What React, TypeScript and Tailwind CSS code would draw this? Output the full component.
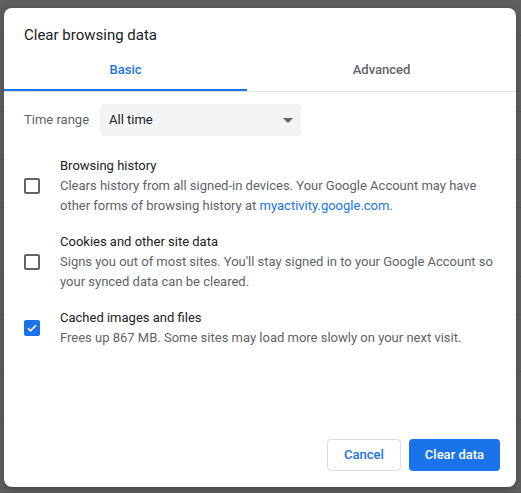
import React from "react";

const rows = [36, 76, 48, 48, 69, 38, 57, 48, 73];

function Checkbox({ checked }: { checked?: boolean }) {
  if (checked) {
    return (
      <div className="w-[16px] h-[16px] shrink-0 rounded-[2px] bg-[#1a73e8] flex items-center justify-center">
        <svg width="12" height="12" viewBox="0 0 24 24">
          <path d="M4 12.5l5 5L20 6.5" fill="none" stroke="#fff" strokeWidth="3.4" />
        </svg>
      </div>
    );
  }
  return <div className="w-[16px] h-[16px] shrink-0 rounded-[2px] border-2 border-[#5f6368]" />;
}

function Item({
  checked,
  title,
  children,
}: {
  checked?: boolean;
  title: string;
  children: React.ReactNode;
}) {
  return (
    <div className="flex items-center gap-[20px]">
      <Checkbox checked={checked} />
      <div className="flex flex-col">
        <div className="text-[13px] leading-[20px] text-[#202124]">{title}</div>
        <div className="text-[13px] leading-[20px] text-[#5f6368] whitespace-nowrap">{children}</div>
      </div>
    </div>
  );
}

export default function App() {
  return (
    <div className="relative w-[521px] h-[493px] overflow-hidden bg-[#5f5f5f] font-['Roboto','Liberation_Sans',sans-serif]">
      <div className="flex flex-col">
        {rows.map((h, i) => (
          <div key={i} style={{ height: h }} className="border-b border-[#565656]" />
        ))}
      </div>
      <div className="absolute left-[4px] top-[8px] w-[512px] h-[479px] bg-white rounded-[8px] shadow-[0_2px_6px_rgba(0,0,0,0.3)] flex flex-col">
        <div className="pl-[20px] pt-[15px] text-[15px] leading-[24px] text-[#202124]">
          Clear browsing data
        </div>
        <div className="flex h-[45px] border-b border-[#e0e0e0]">
          <div className="w-[243px] flex items-center justify-center pt-[3px] border-b-2 border-[#1a73e8] text-[13px] font-medium text-[#1a73e8]">
            Basic
          </div>
          <div className="flex-1 flex items-center justify-center pt-[1px] text-[13px] font-medium text-[#5f6368]">
            Advanced
          </div>
        </div>
        <div className="px-[20px] pt-[12px] flex flex-col">
          <div className="flex items-center">
            <div className="w-[76px] text-[13px] text-[#5f6368]">Time range</div>
            <div className="w-[201px] h-[32px] bg-[#f1f3f4] rounded-[4px] pl-[9px] pr-[8px] flex items-center justify-between">
              <span className="text-[13px] text-[#202124]">All time</span>
              <svg width="10" height="5" viewBox="0 0 10 5">
                <path d="M0 0h10L5 5z" fill="#5f6368" />
              </svg>
            </div>
          </div>
          <div className="mt-[20px] flex flex-col gap-[16px]">
            <Item title="Browsing history">
              Clears history from all signed-in devices. Your Google Account may have
              <br />
              other forms of browsing history at{" "}
              <span className="text-[#1a73e8]">myactivity.google.com</span>.
            </Item>
            <Item title="Cookies and other site data">
              Signs you out of most sites. You'll stay signed in to your Google Account so
              <br />
              your synced data can be cleared.
            </Item>
            <Item checked title="Cached images and files">
              Frees up 867 MB. Some sites may load more slowly on your next visit.
            </Item>
          </div>
        </div>
        <div className="mt-auto flex justify-end gap-[8px] pr-[16px] pb-[16px]">
          <button className="w-[74px] h-[32px] rounded-[4px] border border-[#dadce0] bg-white text-[13px] font-medium text-[#1a73e8]">
            Cancel
          </button>
          <button className="w-[91px] h-[32px] rounded-[4px] bg-[#1a73e8] text-[13px] font-medium text-white">
            Clear data
          </button>
        </div>
      </div>
    </div>
  );
}
